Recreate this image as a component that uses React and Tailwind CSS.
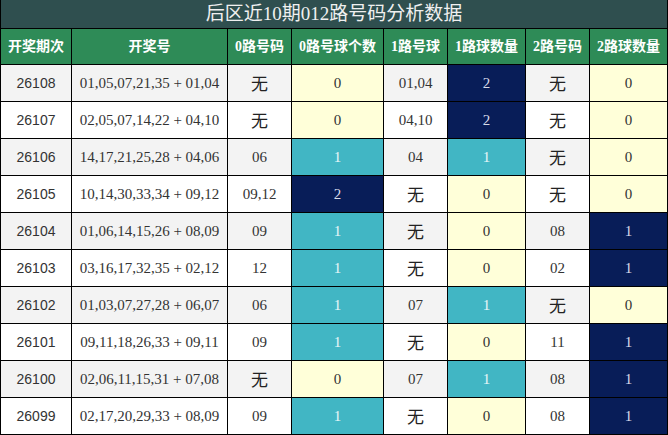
import React from "react";

const rows = [
  ["26108", "01,05,07,21,35 + 01,04", "无", 0, "01,04", 2, "无", 0],
  ["26107", "02,05,07,14,22 + 04,10", "无", 0, "04,10", 2, "无", 0],
  ["26106", "14,17,21,25,28 + 04,06", "06", 1, "04", 1, "无", 0],
  ["26105", "10,14,30,33,34 + 09,12", "09,12", 2, "无", 0, "无", 0],
  ["26104", "01,06,14,15,26 + 08,09", "09", 1, "无", 0, "08", 1],
  ["26103", "03,16,17,32,35 + 02,12", "12", 1, "无", 0, "02", 1],
  ["26102", "01,03,07,27,28 + 06,07", "06", 1, "07", 1, "无", 0],
  ["26101", "09,11,18,26,33 + 09,11", "09", 1, "无", 0, "11", 1],
  ["26100", "02,06,11,15,31 + 07,08", "无", 0, "07", 1, "08", 1],
  ["26099", "02,17,20,29,33 + 08,09", "09", 1, "无", 0, "08", 1],
];

const headers = ["开奖期次", "开奖号", "0路号码", "0路号球个数", "1路号球", "1路球数量", "2路号码", "2路球数量"];

const serif = "font-['Liberation_Serif','Noto_Sans_CJK_SC',serif]";

function countCls(n, max) {
  if (n === 0) return "bg-[#ffffd9] text-[#333]";
  if (n >= max) return "bg-[#081d58] text-[#d8dce8]";
  return "bg-[#41b6c4] text-[#e8f6f8]";
}

function TextCell({ v, bg }) {
  if (v === "无") {
    return (
      <div className={`${bg} flex items-center justify-center text-[17px] text-[#222] font-['Noto_Sans_CJK_SC',sans-serif]`}>
        无
      </div>
    );
  }
  return (
    <div className={`${bg} flex items-center justify-center text-[15px] text-[#333] ${serif}`}>{v}</div>
  );
}

export default function App() {
  return (
    <div className="w-[668px] h-[435px] bg-black px-px pb-px">
      <div className="grid grid-cols-[70px_155px_63px_91px_63px_77px_63px_77px] grid-rows-[28px_35px_repeat(10,36px)] gap-px">
        <div className={`col-span-8 bg-[#2f4f4f] flex items-center justify-center text-[19px] text-[#f0f0f0] ${serif}`}>
          后区近10期012路号码分析数据
        </div>
        {headers.map((h) => (
          <div
            key={h}
            className={`bg-[#2e8b57] flex items-center justify-center text-[14px] font-bold text-white ${serif}`}
          >
            {h}
          </div>
        ))}
        {rows.map((r, i) => {
          const bg = i % 2 === 0 ? "bg-[#f3f3f3]" : "bg-white";
          return (
            <React.Fragment key={r[0]}>
              <div className={`${bg} flex items-center justify-center text-[14px] text-[#333] font-['Liberation_Sans',sans-serif]`}>
                {r[0]}
              </div>
              <div className={`${bg} flex items-center justify-center text-[15px] text-[#333] ${serif}`}>{r[1]}</div>
              <TextCell v={r[2]} bg={bg} />
              <div className={`${countCls(r[3], 2)} flex items-center justify-center text-[15px] ${serif}`}>{r[3]}</div>
              <TextCell v={r[4]} bg={bg} />
              <div className={`${countCls(r[5], 2)} flex items-center justify-center text-[15px] ${serif}`}>{r[5]}</div>
              <TextCell v={r[6]} bg={bg} />
              <div className={`${countCls(r[7], 1)} flex items-center justify-center text-[15px] ${serif}`}>{r[7]}</div>
            </React.Fragment>
          );
        })}
      </div>
    </div>
  );
}
